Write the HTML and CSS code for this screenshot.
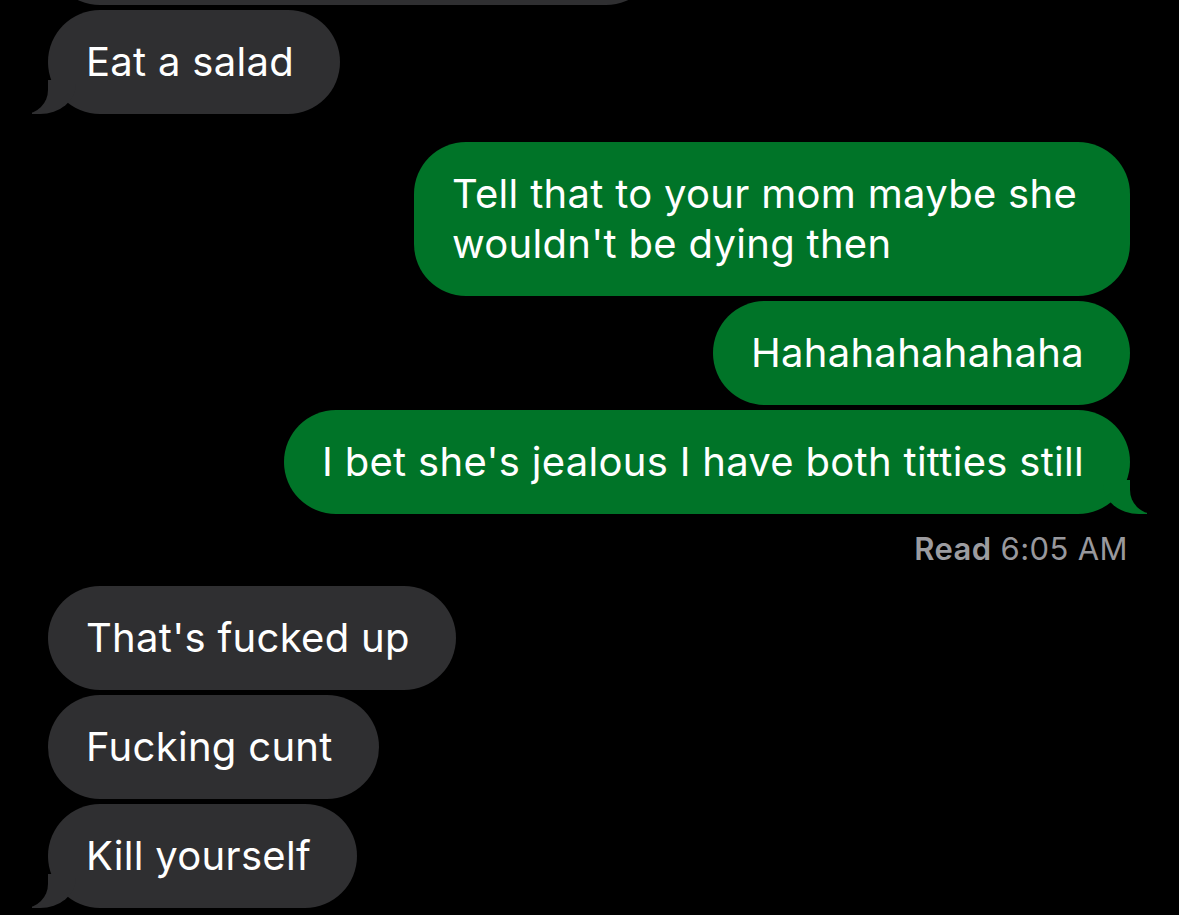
FILE: index.html
```html
<!doctype html>
<html>

<head>
    <title>Messages</title>
    <link rel="stylesheet" href="styles.css">
</head>

<body>
    <div class="thread">
        <div class="row in cut">
            <div class="bubble grey wide">&nbsp;</div>
        </div>
        <div class="row in">
            <div class="bubble grey tail">Eat a salad</div>
        </div>

        <div class="row out first">
            <div class="bubble green wrap">Tell that to your mom maybe she wouldn't be dying then</div>
        </div>
        <div class="row out">
            <div class="bubble green">Hahahahahahaha</div>
        </div>
        <div class="row out">
            <div class="bubble green tail">I bet she's jealous I have both titties still</div>
        </div>
        <div class="receipt"><b>Read</b> 6:05 AM</div>

        <div class="row in">
            <div class="bubble grey">That's fucked up</div>
        </div>
        <div class="row in">
            <div class="bubble grey">Fucking cunt</div>
        </div>
        <div class="row in">
            <div class="bubble grey tail">Kill yourself</div>
        </div>
    </div>
</body>

</html>
```

FILE: styles.css
```css
body {
    margin: 0;
    background-color: #000;
    color: #fff;
    font-family: Inter, "Noto Sans", sans-serif;
    overflow: hidden;
}

.thread {
    display: flex;
    flex-direction: column;
    gap: 5px;
    padding: 0 49px 0 48px;
    margin-top: -99px;
}

.row {
    display: flex;
}

.row.in {
    justify-content: flex-start;
}

.row.out {
    justify-content: flex-end;
}

.row.first {
    margin-top: 23px;
}

.bubble {
    position: relative;
    max-width: 780px;
    padding: 27px 46px 27px 38px;
    border-radius: 52px;
    font-size: 40px;
    line-height: 50px;
    letter-spacing: 0.3px;
}

.bubble.wrap {
    max-width: 632px;
}

.grey {
    background-color: #2f2f31;
}

.green {
    background-color: #007428;
}

.wide {
    width: 526px;
}

/* tails */
.tail::before,
.tail::after {
    content: "";
    position: absolute;
    bottom: 0;
    height: 34px;
}

.grey.tail::before {
    left: -16px;
    width: 44px;
    background-color: #2f2f31;
    border-bottom-right-radius: 36px 30px;
}

.grey.tail::after {
    left: -40px;
    width: 40px;
    background-color: #000;
    border-bottom-right-radius: 24px;
}

.green.tail::before {
    right: -17px;
    width: 44px;
    background-color: #007428;
    border-bottom-left-radius: 36px 30px;
}

.green.tail::after {
    right: -40px;
    width: 40px;
    background-color: #000;
    border-bottom-left-radius: 24px;
}

.receipt {
    text-align: right;
    padding-right: 2px;
    margin: 13px 0 15px;
    font-size: 31px;
    line-height: 34px;
    color: #98989d;
    letter-spacing: 0.4px;
}

.receipt b {
    font-weight: 600;
    color: #9c9ca0;
}
```
